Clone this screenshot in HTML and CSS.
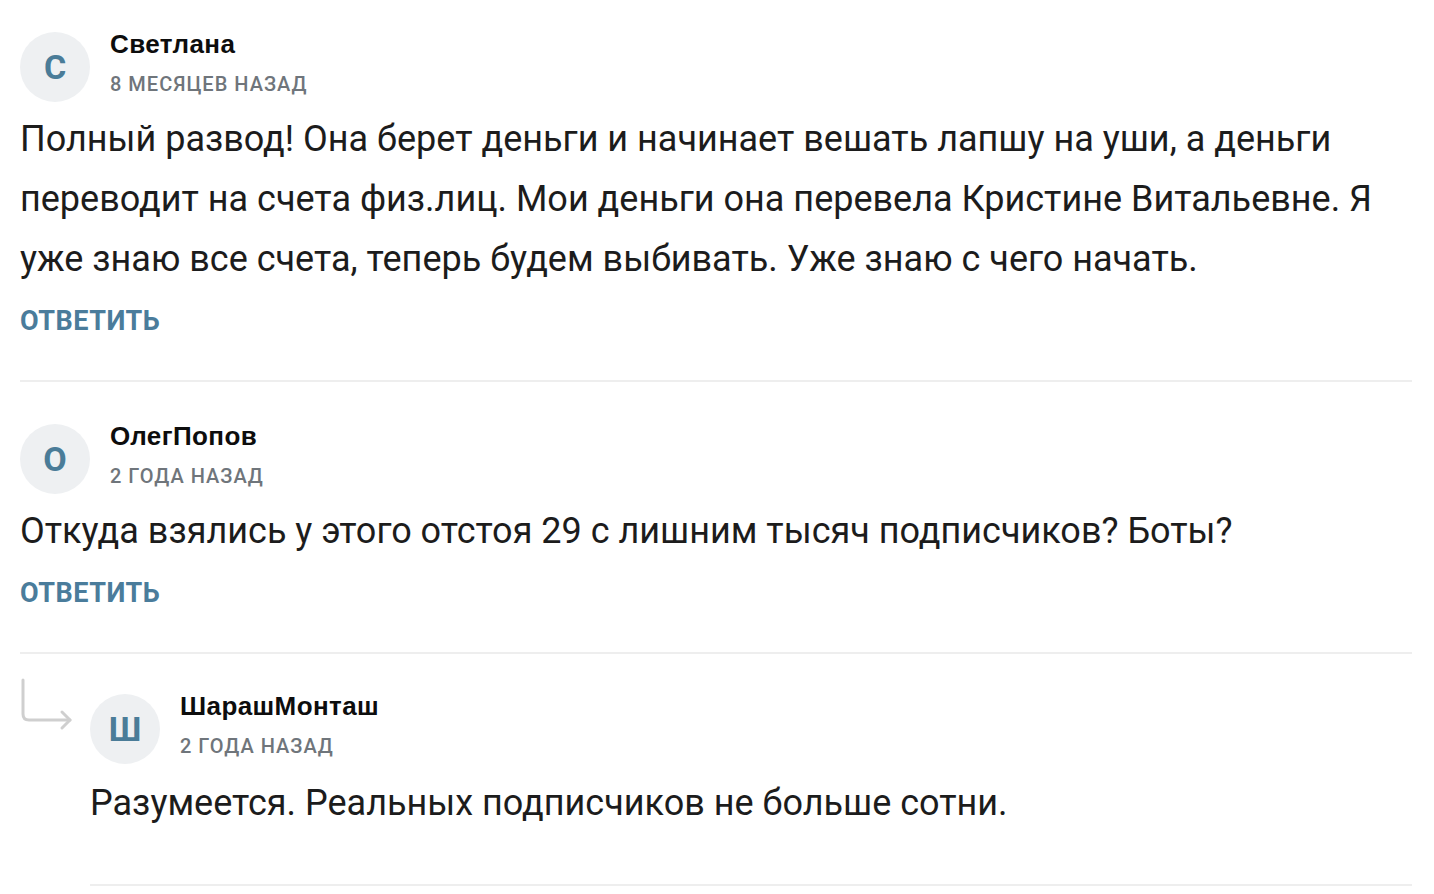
FILE: index.html
```html
<!DOCTYPE html>
<html lang="ru">
<head>
    <meta charset="UTF-8">
    <title>Комментарии</title>
    <link rel="stylesheet" href="styles.css">
</head>
<body>
<div class="comments">
    <div class="comment">
        <div class="comment-head">
            <div class="avatar">С</div>
            <div class="author">
                <div class="name">Светлана</div>
                <div class="date">8 месяцев назад</div>
            </div>
        </div>
        <div class="text">Полный развод! Она берет деньги и начинает вешать лапшу на уши, а деньги переводит на счета физ.лиц. Мои деньги она перевела Кристине Витальевне. Я уже знаю все счета, теперь будем выбивать. Уже знаю с чего начать.</div>
        <a class="reply" href="#">Ответить</a>
    </div>
    <div class="comment">
        <div class="comment-head">
            <div class="avatar">О</div>
            <div class="author">
                <div class="name">ОлегПопов</div>
                <div class="date">2 года назад</div>
            </div>
        </div>
        <div class="text">Откуда взялись у этого отстоя 29 с лишним тысяч подписчиков? Боты?</div>
        <a class="reply" href="#">Ответить</a>
    </div>
    <div class="answer">
        <svg class="answer-arrow" width="56" height="56" viewBox="0 0 56 56">
            <path d="M3 2 V36 Q3 42 9 42 H50" fill="none" stroke="#cfcfcf" stroke-width="3" stroke-linecap="round"/>
            <path d="M42 34 L50 42 L42 50" fill="none" stroke="#cfcfcf" stroke-width="3" stroke-linecap="round" stroke-linejoin="round"/>
        </svg>
        <div class="comment comment-child">
            <div class="comment-head">
                <div class="avatar">Ш</div>
                <div class="author">
                    <div class="name">ШарашМонташ</div>
                    <div class="date">2 года назад</div>
                </div>
            </div>
            <div class="text">Разумеется. Реальных подписчиков не больше сотни.</div>
        </div>
    </div>
</div>
</body>
</html>
```

FILE: styles.css
```css
* {
    margin: 0;
    padding: 0;
    box-sizing: border-box;
}

body {
    background: #fff;
    font-family: Roboto, "Liberation Sans", Arial, sans-serif;
    color: #1c1c1c;
}

.comments {
    padding: 0 22px 0 20px;
}

.comment {
    padding: 42px 0 44px;
    border-bottom: 2px solid #eeeeee;
}

.comments > .comment:first-child {
    padding-top: 32px;
}

.comment-head {
    display: flex;
    align-items: center;
}

.avatar {
    display: flex;
    align-items: center;
    justify-content: center;
    flex: none;
    width: 70px;
    height: 70px;
    margin-right: 20px;
    border-radius: 50%;
    background: #eef0f2;
    color: #4a7c98;
    font-size: 34px;
    font-weight: 700;
}

.author {
    display: flex;
    flex-direction: column;
    gap: 12px;
    margin-top: -9px;
}

.name {
    font-family: "Liberation Sans", Arial, sans-serif;
    font-size: 26px;
    line-height: 30px;
    font-weight: 700;
    color: #0d0d0d;
    letter-spacing: 0.4px;
}

.date {
    font-size: 20px;
    line-height: 26px;
    font-weight: 500;
    color: #6f757b;
    text-transform: uppercase;
    letter-spacing: 1px;
}

.text {
    margin-top: 7px;
    font-size: 36px;
    line-height: 60px;
}

.comment-child .text {
    margin-top: 9px;
}

.reply {
    display: inline-block;
    margin-top: 17px;
    font-size: 27px;
    line-height: 30px;
    font-weight: 700;
    color: #4a7c9b;
    text-transform: uppercase;
    letter-spacing: 0.5px;
    text-decoration: none;
}

.answer {
    display: flex;
    align-items: flex-start;
}

.answer-arrow {
    flex: none;
    width: 56px;
    height: 56px;
    margin: 24px 14px 0 0;
}

.comment-child {
    flex: 1;
    padding-top: 40px;
    padding-bottom: 51px;
}
```
